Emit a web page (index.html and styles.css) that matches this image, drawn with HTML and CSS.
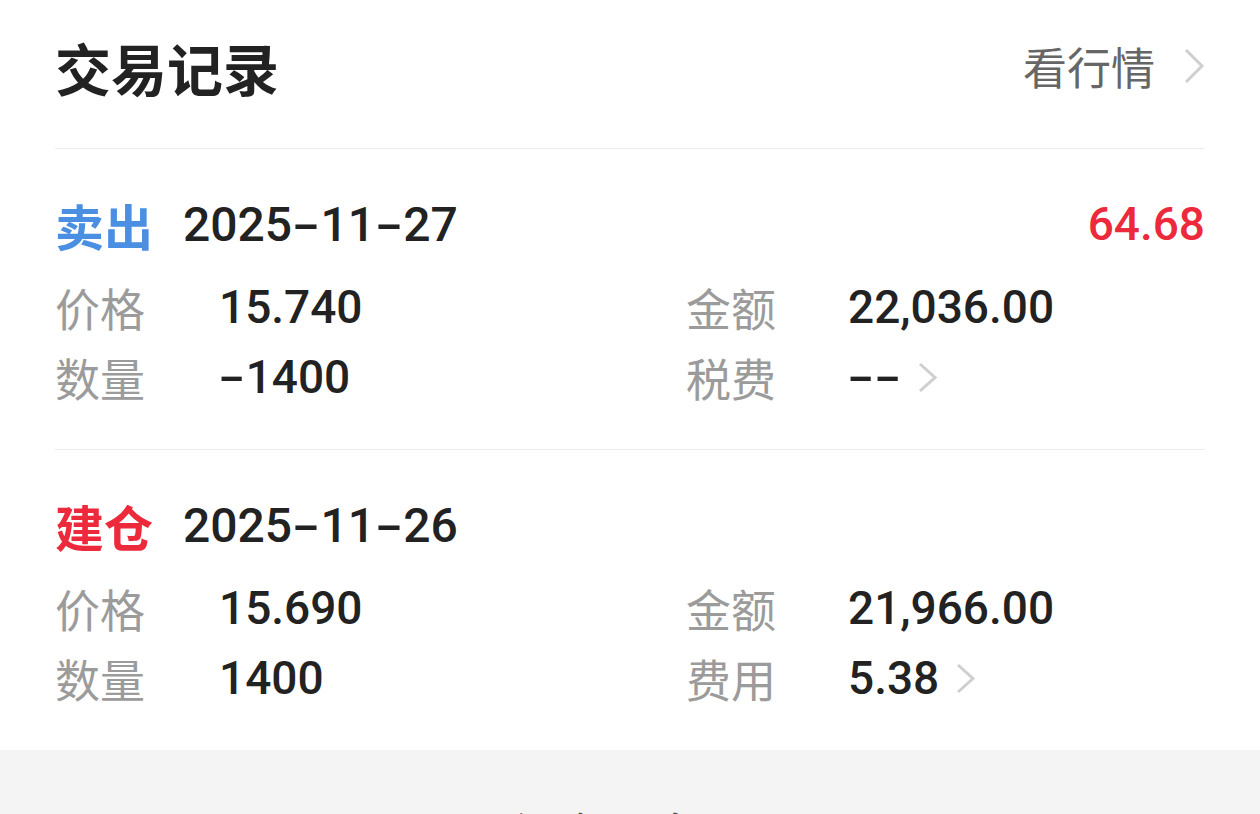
FILE: index.html
```html
<!DOCTYPE html>
<html lang="zh-CN">
<head>
    <meta charset="UTF-8">
    <meta name="viewport" content="width=device-width, initial-scale=1.0">
    <title>交易记录</title>
    <link rel="stylesheet" href="styles.css">
</head>
<body>
    <div class="card">
        <div class="card-head">
            <h2 class="title">交易记录</h2>
            <a class="quote-link" href="#">
                看行情
                <svg class="chevron-lg" width="22" height="38" viewBox="0 0 22 38"><polyline points="3,3 19,19 3,35" fill="none" stroke="#cfcfcf" stroke-width="3"/></svg>
            </a>
        </div>

        <div class="trade">
            <div class="trade-head">
                <span class="tag tag-sell">卖出</span>
                <span class="date">2025<span class="dash">-</span>11<span class="dash">-</span>27</span>
                <span class="profit">64.68</span>
            </div>
            <div class="row">
                <span class="label">价格</span>
                <span class="value">15.740</span>
                <span class="label">金额</span>
                <span class="value">22,036.00</span>
            </div>
            <div class="row">
                <span class="label">数量</span>
                <span class="value"><span class="dash">-</span>1400</span>
                <span class="label">税费</span>
                <span class="value"><span class="dash">-</span><span class="dash">-</span>
                    <svg class="chevron-sm" width="21" height="33" viewBox="0 0 21 33"><polyline points="3,3 18,16.5 3,30" fill="none" stroke="#cfcfcf" stroke-width="3"/></svg>
                </span>
            </div>
        </div>

        <div class="trade">
            <div class="trade-head">
                <span class="tag tag-buy">建仓</span>
                <span class="date">2025<span class="dash">-</span>11<span class="dash">-</span>26</span>
            </div>
            <div class="row">
                <span class="label">价格</span>
                <span class="value">15.690</span>
                <span class="label">金额</span>
                <span class="value">21,966.00</span>
            </div>
            <div class="row">
                <span class="label">数量</span>
                <span class="value">1400</span>
                <span class="label">费用</span>
                <span class="value">5.38
                    <svg class="chevron-sm" width="21" height="33" viewBox="0 0 21 33"><polyline points="3,3 18,16.5 3,30" fill="none" stroke="#cfcfcf" stroke-width="3"/></svg>
                </span>
            </div>
        </div>
    </div>

    <div class="more">没有更多了</div>
</body>
</html>
```

FILE: styles.css
```css
body {
    margin: 0;
    background-color: #f4f4f4;
    font-family: "Noto Sans CJK SC", "Noto Sans", sans-serif;
    color: #222;
}
.card {
    background-color: #fff;
    padding: 0 55px;
}
.card-head {
    display: flex;
    justify-content: space-between;
    align-items: center;
    height: 132px;
    padding-bottom: 16px;
    border-bottom: 1px solid #ececec;
}
.title {
    margin: 0;
    font-size: 56px;
    font-weight: 700;
    color: #222;
}
.quote-link {
    display: flex;
    align-items: center;
    gap: 28px;
    font-size: 44px;
    color: #666;
    text-decoration: none;
}
.trade {
    padding: 45px 0 37px;
}
.trade + .trade {
    border-top: 1px solid #ececec;
}
.trade-head {
    display: flex;
    align-items: center;
    height: 60px;
    margin-bottom: 18px;
}
.tag {
    font-size: 49px;
    font-weight: 700;
    margin-right: 30px;
}
.tag-sell {
    color: #4a8fe2;
}
.tag-buy {
    color: #ec2a3c;
}
.date,
.profit,
.value {
    font-family: Roboto, "Liberation Sans", sans-serif;
    font-weight: 500;
}
.date {
    font-size: 48px;
    color: #222;
}
.profit {
    margin-left: auto;
    font-size: 46px;
    color: #ec2a3c;
}
.dash {
    display: inline-block;
    margin: 0 6px;
    transform: scaleX(1.7);
}
.row {
    display: grid;
    grid-template-columns: 164px 467px 162px 1fr;
    align-items: center;
    height: 70px;
}
.label {
    font-size: 45px;
    color: #9b9b9b;
}
.value {
    display: flex;
    align-items: center;
    font-size: 46px;
    color: #222;
}
.value .dash {
    margin: 0 6px 0 5px;
}
.chevron-sm {
    margin-left: 16px;
}
.more {
    padding-top: 48px;
    text-align: center;
    font-size: 46px;
    color: #555;
}
```
